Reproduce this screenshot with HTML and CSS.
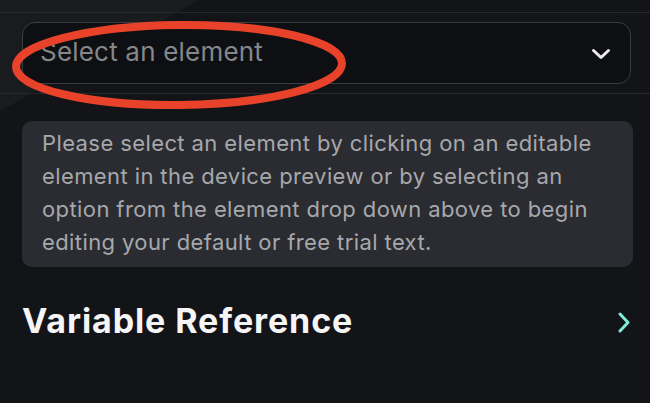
FILE: index.html
```html
<!DOCTYPE html>
<html lang="en">
<head>
<meta charset="utf-8">
<title>Element editor</title>
<link rel="stylesheet" href="styles.css">
</head>
<body>
<div class="page">
  <div class="header">
    <div class="select">
      <span class="placeholder">Select an element</span>
      <svg class="chev-down" width="20" height="12" viewBox="0 0 20 12" aria-hidden="true">
        <path d="M2.5 2.5 L10 9.5 L17.5 2.5" fill="none" stroke="#ececec" stroke-width="3" stroke-linecap="round" stroke-linejoin="round"/>
      </svg>
    </div>
  </div>
  <div class="info">Please select an element by clicking on an editable element in the device preview or by selecting an option from the element drop down above to begin editing your default or free trial text.</div>
  <div class="row">
    <span class="title">Variable Reference</span>
    <svg class="chev-right" width="12" height="21" viewBox="0 0 12 21" aria-hidden="true">
      <path d="M2 2 L10 10.5 L2 19" fill="none" stroke="#7febd9" stroke-width="3" stroke-linecap="round" stroke-linejoin="round"/>
    </svg>
  </div>
  <svg class="annotation" width="360" height="110" viewBox="0 0 360 110" aria-hidden="true">
    <ellipse cx="179" cy="53" rx="163" ry="40" fill="none" stroke="#e8432a" stroke-width="8" transform="rotate(-0.6 179 53)"/>
  </svg>
</div>
</body>
</html>
```

FILE: styles.css
```css
html, body {
  margin: 0;
  padding: 0;
}
body {
  width: 650px;
  height: 403px;
  overflow: hidden;
  background: linear-gradient(150.8deg, #1a1b1f 0, #1a1b1f 97px, #131418 97px);
  font-family: Inter, "Noto Sans", "Liberation Sans", sans-serif;
}
.page {
  position: relative;
  width: 650px;
  height: 403px;
}
.header {
  margin-top: 12px;
  border-top: 1px solid #26282c;
  border-bottom: 1px solid #26282c;
  padding: 9px 19px 9px 22px;
}
.select {
  box-sizing: border-box;
  height: 62px;
  border: 1px solid #3a3c41;
  border-radius: 13px;
  background: #0e0f12;
  display: flex;
  align-items: center;
  justify-content: space-between;
  padding: 0 19px 0 17px;
}
.placeholder {
  font-size: 26px;
  letter-spacing: 0.2px;
  color: #86878b;
  line-height: 1;
  padding-bottom: 2px;
}
.chev-down {
  display: block;
  margin-top: 1px;
}
.info {
  margin: 27px 17px 0 22px;
  padding: 6px 20px 8px 20px;
  background: #2a2c31;
  border-radius: 10px;
  color: #a7a8ac;
  font-size: 22px;
  letter-spacing: 0.4px;
  line-height: 33px;
}
.row {
  margin-top: 34px;
  padding: 0 20px 0 22px;
  display: flex;
  align-items: center;
  justify-content: space-between;
}
.title {
  font-size: 34px;
  font-weight: 700;
  letter-spacing: 0.9px;
  line-height: 40px;
  color: #f5f5f6;
}
.chev-right {
  display: block;
  margin-top: 2px;
}
.annotation {
  position: absolute;
  left: 0;
  top: 0;
}
```
